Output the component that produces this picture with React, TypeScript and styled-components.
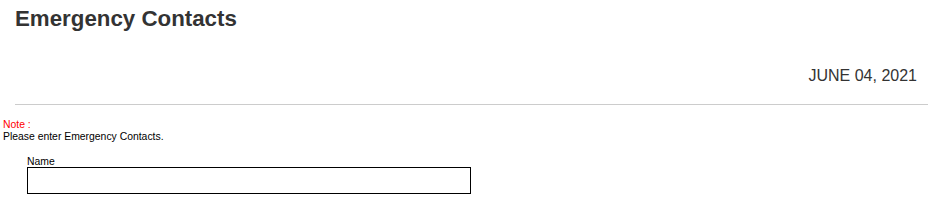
import React from 'react';
import styled, { createGlobalStyle } from 'styled-components';

const GlobalStyle = createGlobalStyle`
  body {
    margin: 0;
    background: #fff;
    font-family: "Liberation Sans", Arial, sans-serif;
  }
`;

const Page = styled.div`
  width: 934px;
  min-height: 217px;
`;

const Header = styled.div`
  padding: 6px 0 0 15px;
`;

const Title = styled.h1`
  margin: 0;
  font-size: 22.3px;
  font-weight: bold;
  line-height: 25px;
  color: #333;
`;

const DateRow = styled.div`
  display: flex;
  justify-content: flex-end;
  padding: 36px 17px 0 0;
  font-size: 16px;
  line-height: 18px;
  color: #333;
`;

const Divider = styled.hr`
  margin: 19px 6px 0 15px;
  border: none;
  border-top: 1px solid #ccc;
  height: 0;
`;

const NoteBlock = styled.div`
  padding: 14px 0 0 3px;
  font-size: 10.4px;
  line-height: 11.5px;
  color: #000;
`;

const NoteLabel = styled.div`
  color: #ff0000;
`;

const FormGroup = styled.div`
  padding: 15px 0 0 27px;
  display: flex;
  flex-direction: column;
`;

const Label = styled.label`
  font-size: 10.4px;
  line-height: 10px;
  color: #000;
`;

const TextInput = styled.input`
  box-sizing: border-box;
  width: 444px;
  height: 27px;
  border: 1px solid #000;
  border-radius: 0;
  padding: 2px 4px;
  font-family: inherit;
  font-size: 12px;
  outline: none;
`;

const App = () => {
  const [name, setName] = React.useState('');

  return (
    <>
      <GlobalStyle />
      <Page>
        <Header>
          <Title>Emergency Contacts</Title>
        </Header>
        <DateRow>JUNE 04, 2021</DateRow>
        <Divider />
        <NoteBlock>
          <NoteLabel>Note :</NoteLabel>
          <div>Please enter Emergency Contacts.</div>
        </NoteBlock>
        <FormGroup>
          <Label htmlFor="ec-name">Name</Label>
          <TextInput id="ec-name" value={name} onChange={e => setName(e.target.value)} />
        </FormGroup>
      </Page>
    </>
  );
};

export default App;
